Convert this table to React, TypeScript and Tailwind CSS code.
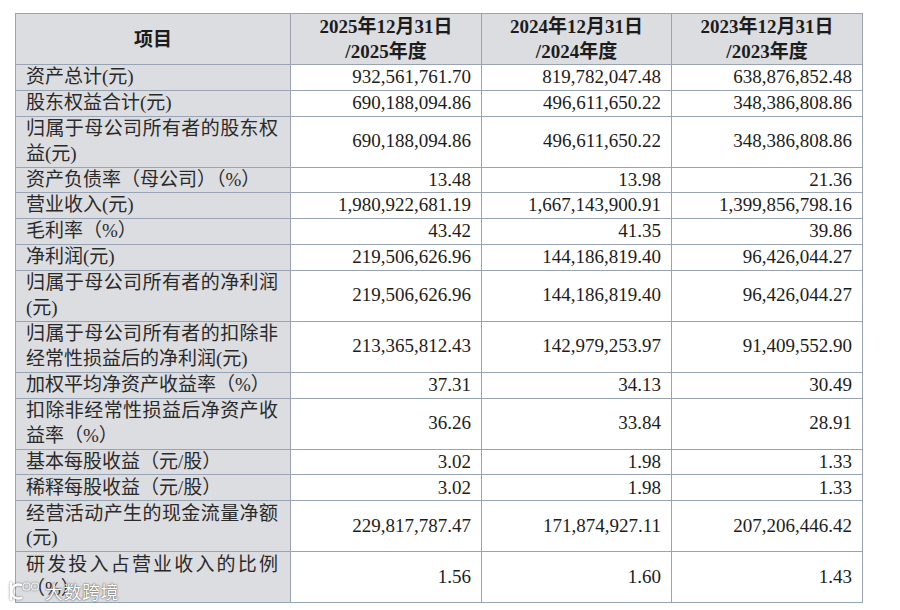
import React from "react";

type Row = { label: string; v: [string, string, string]; d?: boolean };

const rows: Row[] = [
  { label: "资产总计(元)", v: ["932,561,761.70", "819,782,047.48", "638,876,852.48"] },
  { label: "股东权益合计(元)", v: ["690,188,094.86", "496,611,650.22", "348,386,808.86"] },
  { label: "归属于母公司所有者的股东权益(元)", v: ["690,188,094.86", "496,611,650.22", "348,386,808.86"], d: true },
  { label: "资产负债率（母公司）（%）", v: ["13.48", "13.98", "21.36"] },
  { label: "营业收入(元)", v: ["1,980,922,681.19", "1,667,143,900.91", "1,399,856,798.16"] },
  { label: "毛利率（%）", v: ["43.42", "41.35", "39.86"] },
  { label: "净利润(元)", v: ["219,506,626.96", "144,186,819.40", "96,426,044.27"] },
  { label: "归属于母公司所有者的净利润(元)", v: ["219,506,626.96", "144,186,819.40", "96,426,044.27"], d: true },
  { label: "归属于母公司所有者的扣除非经常性损益后的净利润(元)", v: ["213,365,812.43", "142,979,253.97", "91,409,552.90"], d: true },
  { label: "加权平均净资产收益率（%）", v: ["37.31", "34.13", "30.49"] },
  { label: "扣除非经常性损益后净资产收益率（%）", v: ["36.26", "33.84", "28.91"], d: true },
  { label: "基本每股收益（元/股）", v: ["3.02", "1.98", "1.33"] },
  { label: "稀释每股收益（元/股）", v: ["3.02", "1.98", "1.33"] },
  { label: "经营活动产生的现金流量净额(元)", v: ["229,817,787.47", "171,874,927.11", "207,206,446.42"], d: true },
  { label: "研发投入占营业收入的比例（%）", v: ["1.56", "1.60", "1.43"], d: true },
];

const headers = [
  ["2025年12月31日", "/2025年度"],
  ["2024年12月31日", "/2024年度"],
  ["2023年12月31日", "/2023年度"],
];

export default function App() {
  return (
    <div
      className="relative w-[900px] h-[610px] bg-white pt-[13px] pl-[15px] text-[#1c1c1c]"
      style={{ fontFamily: '"Liberation Serif", "Noto Sans CJK SC", serif' }}
    >
      <table className="border-collapse table-fixed w-[847px] text-[19px] leading-[25px]">
        <colgroup>
          <col className="w-[275px]" />
          <col className="w-[191px]" />
          <col className="w-[190px]" />
          <col className="w-[191px]" />
        </colgroup>
        <thead>
          <tr className="h-[51px]">
            <th className="border border-[#98a3b3] bg-[#dcdde1] font-bold text-center align-middle">项目</th>
            {headers.map((h) => (
              <th key={h[0]} className="border border-[#98a3b3] bg-[#dcdde1] font-bold text-center align-middle">
                <div>{h[0]}</div>
                <div>{h[1]}</div>
              </th>
            ))}
          </tr>
        </thead>
        <tbody className="leading-[24.5px]">
          {rows.map((r) => (
            <tr key={r.label} className={r.d ? "h-[51.1px]" : "h-[25.75px]"}>
              <td className="border border-[#98a3b3] bg-[#dcdde1] pl-[10px] pr-[12px] py-0 text-justify align-middle text-[#2a2a2a]">
                {r.label}
              </td>
              {r.v.map((x, i) => (
                <td key={i} className="border border-[#98a3b3] pr-[10px] py-0 text-right align-middle">
                  {x}
                </td>
              ))}
            </tr>
          ))}
        </tbody>
      </table>

      <div className="absolute left-[7px] top-[580px] flex items-center gap-[2px] text-white [text-shadow:0_0_2px_rgba(0,0,0,0.6),0_0_1px_rgba(0,0,0,0.5)]">
        <svg width="36" height="22" viewBox="0 0 36 22" fill="none" className="[filter:drop-shadow(0_0_1px_rgba(0,0,0,0.5))]">
          <path d="M4 3 V19" stroke="white" strokeWidth="2.4" strokeLinecap="round" />
          <path d="M14 5 A7 7 0 1 0 14 18" stroke="white" strokeWidth="2.4" strokeLinecap="round" />
          <rect x="16" y="3" width="7" height="7" rx="3" stroke="#f0f0f0" strokeWidth="1.2" />
          <circle cx="28" cy="6.5" r="3.5" stroke="#f0f0f0" strokeWidth="1.2" />
        </svg>
        <span
          className="text-[18px] leading-[20px] tracking-[0.5px]"
          style={{ fontFamily: '"Noto Sans CJK SC", sans-serif' }}
        >
          大数跨境
        </span>
      </div>
    </div>
  );
}
